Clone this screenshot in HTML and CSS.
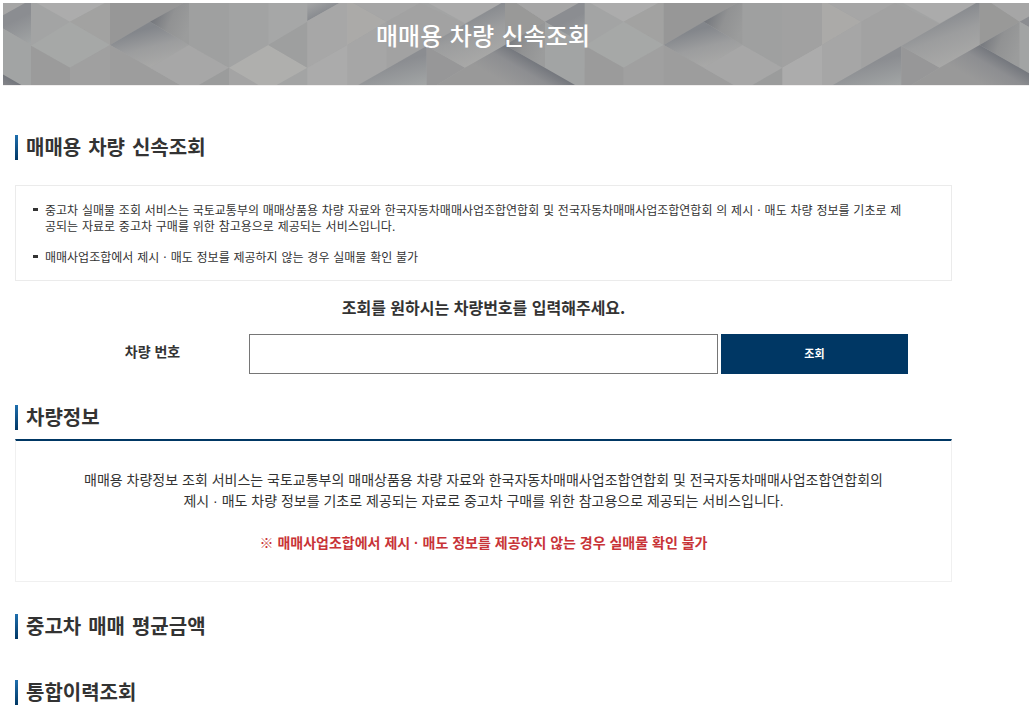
FILE: index.html
```html
<!DOCTYPE html>
<html lang="ko">
<head>
    <meta charset="UTF-8">
    <meta name="viewport" content="width=device-width, initial-scale=1.0">
    <title>매매용 차량 신속조회</title>
    <link rel="stylesheet" href="styles.css">
</head>
<body>

    <header class="banner">
        <svg class="banner-bg" viewBox="9 9 3078 246" preserveAspectRatio="xMidYMid slice" aria-hidden="true">
            <defs>
                <linearGradient id="shade" x1="0.25" y1="0.25" x2="0.55" y2="0.95">
                    <stop offset="0" stop-color="#83868b"/>
                    <stop offset="0.5" stop-color="#9c9d9e"/>
                    <stop offset="1" stop-color="#a8a8a7"/>
                </linearGradient>
                <linearGradient id="shade-deep" x1="0" y1="0.4" x2="0.9" y2="0.8">
                    <stop offset="0" stop-color="#72757b"/>
                    <stop offset="0.5" stop-color="#919293"/>
                    <stop offset="1" stop-color="#9b9c9c"/>
                </linearGradient>
                <linearGradient id="shade-soft" x1="0.5" y1="0.45" x2="0.8" y2="1.1">
                    <stop offset="0" stop-color="#8b8d91"/>
                    <stop offset="1" stop-color="#a3a6a6"/>
                </linearGradient>
                <linearGradient id="shade-up" x1="0.6" y1="0.6" x2="0.1" y2="0">
                    <stop offset="0" stop-color="#85888d"/>
                    <stop offset="1" stop-color="#a2a3a4"/>
                </linearGradient>
                <linearGradient id="shade-edge" gradientUnits="userSpaceOnUse" x1="1650" y1="212" x2="1600" y2="298">
                    <stop offset="0" stop-color="#74777d"/>
                    <stop offset="0.4" stop-color="#8d8e91"/>
                    <stop offset="1" stop-color="#999999"/>
                </linearGradient>
                <g id="cubes-a">
                    <rect x="93" y="9" width="950" height="246" fill="#a3a4a4"/>
                    <polygon points="110,9 315,9 210,65" fill="#acacac"/>
                    <polygon points="210,65 315,9 330,9 330,135" fill="#a2a2a1"/>
                    <polygon points="93,137 210,65 330,135 210,203" fill="#a6a8a7"/>
                    <polygon points="93,137 210,203 210,255 93,255" fill="#9b9b9b"/>
                    <polygon points="210,203 330,135 330,255 210,255" fill="#a0a0a0"/>
                    <polygon points="330,9 550,9 330,135" fill="#979797"/>
                    <polygon points="330,135 450,65 567,135 450,203" fill="url(#shade)"/>
                    <polygon points="450,65 550,9 567,9 567,135" fill="url(#shade-deep)"/>
                    <polygon points="330,135 540,255 330,255" fill="#9d9d9d"/>
                    <polygon points="450,203 567,135 687,203 597,255 540,255" fill="#a7a7a7"/>
                    <polygon points="567,9 687,9 687,203 567,135" fill="#9fa0a0"/>
                    <polygon points="597,255 687,203 687,255" fill="#9b9c9c"/>
                    <polygon points="687,203 775,255 687,255" fill="#a4a4a4"/>
                    <polygon points="687,9 805,9 805,135 687,203" fill="#a2a3a3"/>
                    <polygon points="687,203 805,135 922,203 830,255 775,255" fill="#afafad"/>
                    <polygon points="805,9 925,9 925,65 805,135" fill="#a6a7a7"/>
                    <polygon points="922,9 1018,9 922,63" fill="url(#shade-up)"/>
                    <polygon points="805,135 922,65 922,203" fill="#9e9f9f"/>
                    <polygon points="922,63 1018,9 1042,9 1042,135 922,203" fill="#a7a7a7"/>
                    <polygon points="922,203 1042,135 1042,255 922,255" fill="#ababab"/>
                </g>
                <g id="cubes-b">
                    <rect x="1042" y="9" width="713" height="246" fill="#a3a4a4"/>
                    <polygon points="1042,9 1060,9 1160,65 1042,135" fill="#abaaa8"/>
                    <polygon points="1060,9 1260,9 1160,65" fill="#a6a6a6"/>
                    <polygon points="1042,135 1160,65 1160,206 1075,255 1042,255" fill="#a6a6a6"/>
                    <polygon points="1160,65 1260,9 1395,72 1280,138 1160,206" fill="#a2a2a2"/>
                    <polygon points="1285,9 1505,9 1395,70" fill="#ababab"/>
                    <polygon points="1075,255 1280,138 1280,255" fill="url(#shade-soft)"/>
                    <polygon points="1280,138 1395,203 1310,255 1280,255" fill="#979798"/>
                    <polygon points="1280,138 1515,3 1515,135 1395,203" fill="url(#shade)"/>
                    <polygon points="1515,9 1550,9 1635,65 1515,135" fill="#999998"/>
                    <polygon points="1550,9 1739,9 1635,65" fill="#a6a6a6"/>
                    <polygon points="1515,135 1635,65 1635,203" fill="url(#shade-deep)"/>
                    <polygon points="1635,65 1736,9 1755,9 1755,135" fill="url(#shade-soft)"/>
                    <polygon points="1635,65 1755,135 1755,255 1725,255 1635,203" fill="#a2a4a4"/>
                    <polygon points="1310,255 1395,203 1515,135 1725,255" fill="url(#shade-edge)"/>
                </g>
            </defs>
            <use href="#cubes-b" x="-1661"/>
            <use href="#cubes-a"/>
            <use href="#cubes-b"/>
            <use href="#cubes-a" x="1661"/>
            <polygon points="2347,9 2467,9 2467,135 2347,203" fill="#a1a1a1"/>
            <polygon points="2347,203 2467,135 2467,255 2347,255" fill="#acacac"/>
            <use href="#cubes-b" x="1424"/>
        </svg>
        <h1 class="banner-title">매매용 차량 신속조회</h1>
    </header>

    <main class="content">
        <h2 class="title">매매용 차량 신속조회</h2>
        <ul class="notice">
            <li><p>중고차 실매물 조회 서비스는 국토교통부의 매매상품용 차량 자료와 한국자동차매매사업조합연합회 및 전국자동차매매사업조합연합회 의 제시 · 매도 차량 정보를 기초로 제<br>공되는 자료로 중고차 구매를 위한 참고용으로 제공되는 서비스입니다.</p></li>
            <li><p>매매사업조합에서 제시 · 매도 정보를 제공하지 않는 경우 실매물 확인 불가</p></li>
        </ul>

        <p class="guide">조회를 원하시는 차량번호를 입력해주세요.</p>
        <form class="search">
            <label for="car-number">차량 번호</label>
            <input type="text" id="car-number">
            <button type="button">조회</button>
        </form>

        <h2 class="title title-info">차량정보</h2>
        <div class="info">
            <p>매매용 차량정보 조회 서비스는 국토교통부의 매매상품용 차량 자료와 한국자동차매매사업조합연합회 및 전국자동차매매사업조합연합회의<br>제시 · 매도 차량 정보를 기초로 제공되는 자료로 중고차 구매를 위한 참고용으로 제공되는 서비스입니다.</p>
            <p class="warning">※ 매매사업조합에서 제시 · 매도 정보를 제공하지 않는 경우 실매물 확인 불가</p>
        </div>

        <h2 class="title title-price">중고차 매매 평균금액</h2>
        <h2 class="title title-history">통합이력조회</h2>
    </main>

</body>
</html>
```
FILE: styles.css
```css
* {
    box-sizing: border-box;
}
body {
    margin: 0;
    padding: 3px 3px 0;
    background: #fff;
    color: #333;
    font-family: "Liberation Sans", "Noto Sans CJK KR", sans-serif;
    font-size: 14px;
    line-height: 21px;
}
h1, h2, p, ul {
    margin: 0;
    padding: 0;
}
.banner-title, .title, .notice {
    font-family: "DejaVu Sans", "Noto Sans CJK KR", sans-serif;
}
.banner {
    display: grid;
    height: 83px;
    border-bottom: 1px solid #f0eeee;
    overflow: hidden;
}
.banner-bg {
    grid-area: 1 / 1;
    width: 100%;
    height: 82px;
}
.banner-title {
    grid-area: 1 / 1;
    padding: 16px 66px 0 0;
    color: #fff;
    font-size: 24px;
    font-weight: 500;
    line-height: 36px;
    text-align: center;
    z-index: 1;
}
.content {
    margin: 49px 77px 0 12px;
}
.title {
    display: flex;
    gap: 8px;
    height: 25px;
    font-size: 20px;
    font-weight: 700;
    line-height: 27px;
}
.title::before {
    content: "";
    width: 3px;
    height: 25px;
    background: linear-gradient(#1f6fae, #003764);
}
.notice {
    display: grid;
    gap: 15px;
    margin-top: 25px;
    padding: 17px 0 14px 17px;
    border: 1px solid #ebebeb;
    list-style: none;
    font-size: 12px;
    line-height: 16px;
}
.notice li {
    display: flex;
    gap: 7px;
}
.notice li::before {
    content: "";
    flex: none;
    width: 5px;
    height: 3px;
    margin-top: 5px;
    background: #333;
}
.guide {
    margin-top: 14px;
    font-family: "Noto Sans CJK KR", sans-serif;
    font-size: 16px;
    font-weight: 700;
    line-height: 24px;
    text-align: center;
}
.search {
    display: flex;
    align-items: center;
    margin-top: 15px;
}
.search label {
    width: 25%;
    padding: 0 69px 3px 0;
    font-weight: 700;
    text-align: right;
}
.search input {
    width: 50%;
    height: 40px;
    padding: 0 10px;
    border: 1px solid #767676;
    font: inherit;
}
.search button {
    width: 20%;
    height: 40px;
    margin-left: 3px;
    padding: 0 0 3px;
    border: 0;
    background: #003764;
    color: #fff;
    font-family: inherit;
    font-size: 11px;
    font-weight: 700;
    cursor: pointer;
}
.title-info {
    margin-top: 31px;
}
.info {
    margin-top: 9px;
    padding: 29px 16px 27px;
    border: 1px solid #f0f0f0;
    border-top: 2px solid #003764;
    text-align: center;
}
.warning {
    margin-top: 21px;
    color: #c83337;
    font-weight: 700;
}
.title-price {
    margin-top: 32px;
}
.title-history {
    margin-top: 41px;
}
```
